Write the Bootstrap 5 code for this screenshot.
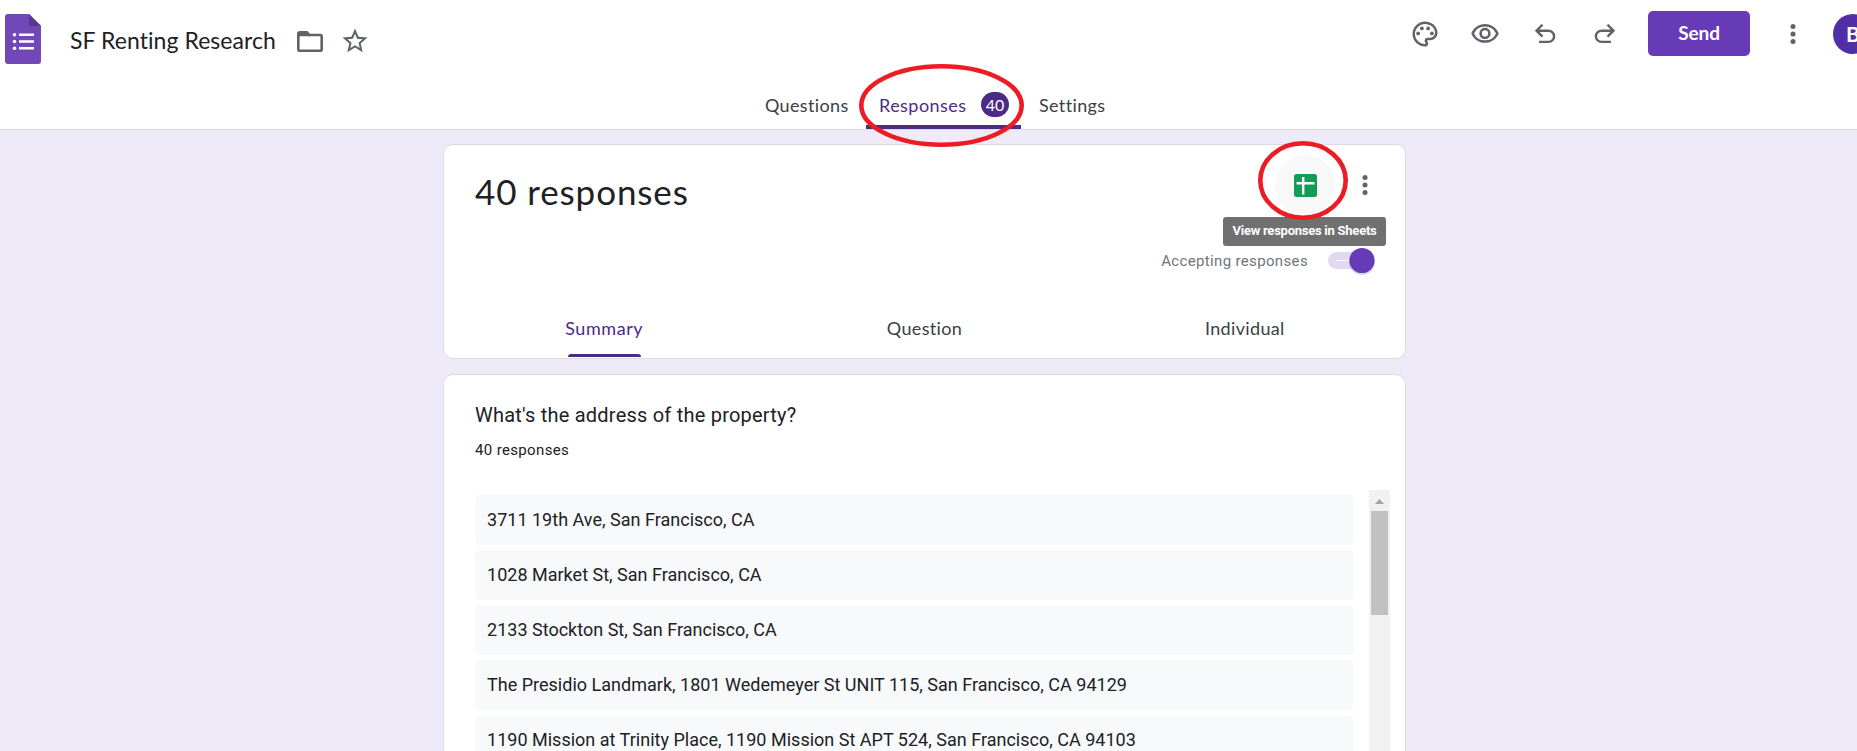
<!DOCTYPE html>
<html lang="en">
<head>
<meta charset="utf-8">
<title>SF Renting Research</title>
<link href="https://cdn.jsdelivr.net/npm/bootstrap@5.3.0/dist/css/bootstrap.min.css" rel="stylesheet">
<style>
body{background:#eeeaf8;font-family:Roboto,sans-serif;color:#202124;height:751px;overflow:hidden}
svg{display:block;flex:none}
.gs{font-family:Lato,"Open Sans",sans-serif}
.topbar{height:130px;background:#fff;border-bottom:1px solid #dadce0}
.toprow{height:80px}
.brand-side{padding-left:5px;height:78px}
.doc-title{font-size:23px;line-height:30px;margin-left:29px;margin-top:1px;width:227px;letter-spacing:.06px;white-space:nowrap}
.tools{height:67px}
.tool{width:60px;display:flex;justify-content:center}
.star{margin-left:17px}
.btn-send{background:#673ab7;color:#fff;width:102px;height:45px;border-radius:5px;font-size:19px;font-weight:700;padding:0;margin-left:13px;margin-right:28px;letter-spacing:-.1px}
.avatar{width:40px;height:40px;border-radius:50%;background:#512da8;color:#fff;font-size:21px;font-weight:700;margin-left:25px;margin-right:-16px;flex:none}
.maintabs{height:49px;padding-left:765px;font-size:18px;letter-spacing:.35px;color:#3c4043}
.maintabs a{color:inherit;text-decoration:none;white-space:nowrap;line-height:27px;padding-top:12px}
.maintabs .t1{width:101px}
.maintabs .t2{width:155px;padding-left:13px;border-bottom:4px solid #4c2b87;border-radius:3px 3px 0 0;color:#4c2b87;margin-right:18px}
.t2>span:first-child{width:102px;letter-spacing:.45px}
.count{width:28px;height:25px;border-radius:13px;background:#4c2b87;color:#fff;font-size:16px;line-height:25px;text-align:center;letter-spacing:0}
main{height:621px;overflow:hidden;padding-top:14px}
.sheet{width:963px;margin-left:443px;background:#fff;border:1px solid #dadce0;border-radius:10px}
.summary{height:215px}
.bigcount{font-size:35px;line-height:44px;font-weight:400;margin:24px 0 0 31px;white-space:nowrap;letter-spacing:.9px}
.sheetbtn{width:60px;height:60px;border-radius:50%;background:#f8f8f8}
.actions{margin:10px 29px 0 0}
.more{margin-left:15px;margin-right:-4px}
.accept{font-size:15px;letter-spacing:.35px;color:#70757a;margin-right:19px}
.switch-row{margin-top:32px}
.subtabs{font-size:18px;letter-spacing:.35px;color:#3c4043}
.subtabs>div{text-align:center;height:43px;line-height:27px}
.subtabs .on{color:#4c2b87;letter-spacing:.55px}
.on i{display:block;width:73px;height:3px;border-radius:3px 3px 0 0;background:#4c2b87;margin:12px auto 0}
.answers{margin-top:15px;height:377px;padding:25px 15px 0 31px;border-bottom:0;border-radius:10px 10px 0 0}
.q{font-size:20px;line-height:30px;letter-spacing:.22px}
.n{font-size:15px;line-height:22px;margin-top:9px;letter-spacing:.35px}
.list-area{margin-top:29px;height:261px;overflow:hidden}
.rows{width:879px;padding-top:5px;row-gap:5px}
.ans{height:50px;border-radius:5px;background:#f8f9fb;padding-left:12px;font-size:18px;line-height:50px;letter-spacing:.01px;white-space:nowrap}
.scroller{width:21px;background:#f1f1f1;height:261px}
.thumb{width:17px;height:104px;background:#c1c1c1}
.ring{position:absolute;pointer-events:none}
.ring-tab{left:859px;top:64px}
.ring-sheets{left:1258px;top:141px}
.tip{position:absolute;left:1223px;top:217px;width:163px;height:29px;border-radius:3px;background:#707070;color:#fff;font-size:13px;font-weight:700;line-height:28px;text-align:center;white-space:nowrap;letter-spacing:-.25px}
</style>
</head>
<body class="position-relative">
<header class="topbar">
 <div class="toprow d-flex justify-content-between">
  <div class="brand-side d-flex align-items-center">
   <svg width="36" height="50" viewBox="0 0 36 50"><path fill="#7248b9" d="M3 0h21l12 12v35a3 3 0 0 1-3 3H3a3 3 0 0 1-3-3V3a3 3 0 0 1 3-3z"/><path fill="#5a3791" d="M24 0l12 12H24z"/><path stroke="#fff" stroke-width="2.6" d="M14 20.700h15M14 27.500h15M14 34.300h15"/><g fill="#fff"><circle cx="9.500" cy="20.700" r="1.800"/><circle cx="9.500" cy="27.500" r="1.800"/><circle cx="9.500" cy="34.300" r="1.800"/></g></svg>
   <div class="doc-title gs">SF Renting Research</div>
   <svg class="mt-1" width="26" height="21" viewBox="2 4 20 16" preserveAspectRatio="none" fill="#5f6368"><path d="M9.170 6l2 2H20v10H4V6h5.170M10 4H4c-1.100 0-1.990.9-1.990 2L2 18c0 1.100.9 2 2 2h16c1.100 0 2-.9 2-2V8c0-1.100-.9-2-2-2h-8l-2-2z"/><path d="M3 5h7l2.500 3H3z"/></svg>
   <svg class="mt-1 star" width="30" height="30" viewBox="0 0 24 24" fill="#5f6368"><path d="M22 9.240l-7.190-.62L12 2 9.190 8.630 2 9.240l5.460 4.730L5.820 21 12 17.270 18.180 21l-1.630-7.030L22 9.240zM12 15.400l-3.760 2.270 1-4.280-3.320-2.880 4.380-.38L12 6.100l1.710 4.040 4.380.38-3.320 2.880 1 4.280L12 15.400z"/></svg>
  </div>
  <div class="tools d-flex align-items-center">
   <div class="tool"><svg width="30" height="30" viewBox="0 0 24 24" fill="#5f6368"><path d="M12 22C6.490 22 2 17.510 2 12S6.490 2 12 2s10 4.040 10 9c0 3.310-2.690 6-6 6h-1.770c-.28 0-.5.22-.5.5 0 .12.050.23.130.33.410.47.640 1.060.640 1.670A2.500 2.500 0 0 1 12 22zm0-18c-4.410 0-8 3.590-8 8s3.590 8 8 8c.28 0 .5-.22.5-.5a.54.54 0 0 0-.14-.35c-.41-.46-.63-1.050-.63-1.650a2.500 2.500 0 0 1 2.500-2.500H16c2.210 0 4-1.790 4-4 0-3.860-3.590-7-8-7z"/><circle cx="6.500" cy="11.500" r="1.500"/><circle cx="9.500" cy="7.500" r="1.500"/><circle cx="14.500" cy="7.500" r="1.500"/><circle cx="17.500" cy="11.500" r="1.500"/></svg></div>
   <div class="tool"><svg width="30" height="30" viewBox="0 0 24 24" fill="#5f6368"><path d="M12 6a9.770 9.770 0 0 1 8.820 5.500 9.770 9.770 0 0 1-17.640 0A9.770 9.770 0 0 1 12 6m0-2C7 4 2.730 7.110 1 11.500 2.730 15.890 7 19 12 19s9.270-3.110 11-7.500C21.270 7.110 17 4 12 4zm0 5a2.500 2.500 0 0 1 0 5 2.500 2.500 0 0 1 0-5m0-2c-2.480 0-4.500 2.020-4.500 4.500S9.520 16 12 16s4.500-2.020 4.500-4.500S14.480 7 12 7z"/></svg></div>
   <div class="tool"><svg width="22" height="20" viewBox="0 0.500 22 20" fill="none" stroke="#5f6368" stroke-width="2.400"><path d="M8.500 1.200L2.500 7.200l6 6M2.500 7.200H14.500a5.600 5.600 0 0 1 0 11.200H5"/></svg></div>
   <div class="tool"><svg width="22" height="20" viewBox="0 0.500 22 20" fill="none" stroke="#5f6368" stroke-width="2.400"><path d="M13.500 1.200l6 6-6 6M19.500 7.200H7.500a5.600 5.600 0 0 0 0 11.200h9.500"/></svg></div>
   <button class="btn btn-send gs">Send</button>
   <svg width="30" height="30" viewBox="0 0 24 24" fill="#5f6368"><circle cx="12" cy="6" r="2"/><circle cx="12" cy="12" r="2"/><circle cx="12" cy="18" r="2"/></svg>
   <div class="avatar gs d-flex align-items-center justify-content-center">B</div>
  </div>
 </div>
 <nav class="maintabs d-flex gs">
  <a class="t1">Questions</a>
  <a class="t2 d-flex"><span>Responses</span><span class="count">40</span></a>
  <a>Settings</a>
 </nav>
</header>

<main>
 <section class="sheet summary d-flex flex-column">
  <div class="d-flex justify-content-between">
   <h1 class="bigcount gs">40 responses</h1>
   <div class="actions d-flex flex-column align-items-end">
    <div class="d-flex align-items-center">
     <div class="sheetbtn d-flex align-items-center justify-content-center"><svg width="23" height="23" viewBox="0 0 23 23"><rect width="23" height="23" rx="2.500" fill="#0f9d58"/><path d="M9.200 3v17.500M2.500 9.300h18" stroke="#fff" stroke-width="2.400"/></svg></div>
     <svg class="more" width="30" height="30" viewBox="0 0 24 24" fill="#5f6368"><circle cx="12" cy="6" r="2"/><circle cx="12" cy="12" r="2"/><circle cx="12" cy="18" r="2"/></svg>
    </div>
    <div class="switch-row d-flex align-items-center">
     <span class="accept">Accepting responses</span>
     <svg width="49" height="28" viewBox="0 0 49 28" overflow="visible"><rect x="1" y="5" width="43" height="17" rx="8.500" fill="#e1d8f1"/><path d="M9 13.500h14" stroke="#fff"/><circle cx="35" cy="15" r="13" fill="#673ab7" opacity=".22"/><circle cx="35" cy="13.500" r="12.600" fill="#673ab7"/></svg>
    </div>
   </div>
  </div>
  <div class="subtabs gs row g-0 mt-auto">
   <div class="col-4 on">Summary<i></i></div>
   <div class="col-4">Question</div>
   <div class="col-4">Individual</div>
  </div>
 </section>

 <section class="sheet answers">
  <div class="q">What's the address of the property?</div>
  <div class="n">40 responses</div>
  <div class="d-flex justify-content-between list-area">
   <div class="rows d-grid align-content-start">
    <div class="ans">3711 19th Ave, San Francisco, CA</div>
    <div class="ans">1028 Market St, San Francisco, CA</div>
    <div class="ans">2133 Stockton St, San Francisco, CA</div>
    <div class="ans">The Presidio Landmark, 1801 Wedemeyer St UNIT 115, San Francisco, CA 94129</div>
    <div class="ans">1190 Mission at Trinity Place, 1190 Mission St APT 524, San Francisco, CA 94103</div>
   </div>
   <div class="scroller d-flex flex-column align-items-center">
    <svg width="21" height="21" viewBox="0 0 21 21"><path d="M6 14l4.500-5 4.500 5z" fill="#a3a3a3"/></svg>
    <div class="thumb"></div>
   </div>
  </div>
 </section>
</main>

<div class="tip">View responses in Sheets</div>
<svg class="ring ring-tab" width="165" height="83"><ellipse cx="82.500" cy="41.500" rx="80.200" ry="39.200" fill="none" stroke="#ed1c24" stroke-width="4.600"/></svg>
<svg class="ring ring-sheets" width="90" height="79"><ellipse cx="45" cy="39.500" rx="42.700" ry="37.200" fill="none" stroke="#ed1c24" stroke-width="4.600"/></svg>
<script src="https://cdn.jsdelivr.net/npm/bootstrap@5.3.0/dist/js/bootstrap.bundle.min.js"></script>
</body>
</html>
